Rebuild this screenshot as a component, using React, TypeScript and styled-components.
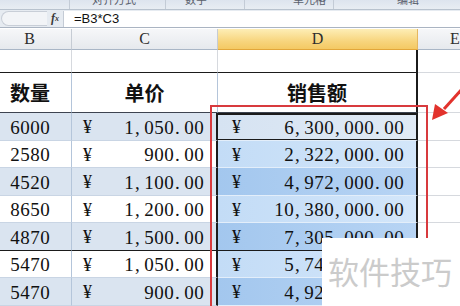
import React from "react";
import styled, { createGlobalStyle } from "styled-components";

const GlobalStyle = createGlobalStyle`
  html, body {
    margin: 0;
    padding: 0;
    background: #fff;
  }
  body {
    width: 460px;
    height: 306px;
    overflow: hidden;
    font-family: "Noto Sans CJK SC", sans-serif;
  }
`;

const Page = styled.div`
  position: relative;
  width: 460px;
  height: 306px;
  overflow: hidden;
  display: flex;
  flex-direction: column;
`;

/* ribbon strip, cut off at the top */
const Ribbon = styled.div`
  height: 10px;
  flex: none;
  display: flex;
  box-sizing: border-box;
  background: linear-gradient(#dde4ee, #e8edf3);
  border-bottom: 1px solid #b8c2ce;
  overflow: hidden;
`;

const Group = styled.div<{ $w: number; $pad: number }>`
  flex: none;
  width: ${(p) => p.$w}px;
  padding-left: ${(p) => p.$pad}px;
  box-sizing: border-box;
  border-right: 1px solid #c3cbd6;
  overflow: hidden;
`;

const GroupLabel = styled.span`
  display: block;
  margin-top: -6px;
  font-size: 11px;
  line-height: 11px;
  color: #59606c;
  white-space: nowrap;
`;

const FormulaBar = styled.div`
  height: 18px;
  flex: none;
  display: flex;
  align-items: stretch;
  box-sizing: border-box;
  background: #e6ebf1;
  border-bottom: 1px solid #aab4c2;
`;

const NameBox = styled.div`
  width: 46px;
  margin: 1px 0 1px 1px;
  box-sizing: border-box;
  border: 1px solid #c8ced7;
  border-right: none;
  border-radius: 8px 0 0 8px;
  background: #f2f4f7;
`;

const Fx = styled.div`
  width: 16px;
  display: flex;
  align-items: center;
  justify-content: center;
  font-family: "Liberation Serif", serif;
  font-style: italic;
  font-weight: 700;
  font-size: 12px;
  color: #3a3a3a;

  sub {
    font-size: 8px;
    vertical-align: -1px;
  }
`;

const FormulaInput = styled.div`
  flex: 1;
  margin: 1px 0 0;
  padding-left: 10px;
  background: #fff;
  border-left: 1px solid #c4cbd5;
  font-family: "Liberation Sans", sans-serif;
  font-size: 13px;
  line-height: 16px;
  color: #111;
`;

const Sheet = styled.div`
  margin-top: 1px;
  display: grid;
  grid-template-columns: 72px 146px 200px 1fr;
  grid-template-rows: 21px 23px 40px repeat(7, 27.5px);
`;

const ColHead = styled.div<{ $active?: boolean; $pl?: number; $pr?: number }>`
  display: flex;
  align-items: center;
  justify-content: ${(p) => (p.$pl ? "flex-start" : "center")};
  padding-left: ${(p) => p.$pl || 0}px;
  padding-right: ${(p) => p.$pr || 0}px;
  box-sizing: border-box;
  font-family: "Liberation Serif", serif;
  font-size: 16px;
  color: #2d2d2d;
  background: ${(p) =>
    p.$active
      ? "linear-gradient(#fdeeb6, #f7d57e 60%, #f4c963)"
      : "linear-gradient(#f6f7f9, #e6e9ed)"};
  border-right: 1px solid ${(p) => (p.$active ? "#e5b760" : "#c6ccd4")};
  border-bottom: 1px solid ${(p) => (p.$active ? "#e2a63a" : "#a9b6c6")};
`;

const GridCell = styled.div<{ $edge?: boolean; $dark?: boolean }>`
  box-sizing: border-box;
  background: #fff;
  border-right: ${(p) => (p.$edge ? "2px solid #1b1b1b" : "1px solid #d6d9de")};
  border-bottom: 1px solid ${(p) => (p.$dark ? "#1b1b1b" : "#d6d9de")};
`;

const HeadCell = styled.div<{ $left?: boolean; $edge?: boolean; $plain?: boolean }>`
  display: flex;
  align-items: center;
  justify-content: ${(p) => (p.$left ? "flex-start" : "center")};
  padding-left: ${(p) => (p.$left ? 10 : 0)}px;
  box-sizing: border-box;
  background: #fff;
  font-family: "Noto Sans CJK SC", sans-serif;
  font-weight: 700;
  font-size: 20px;
  color: #111;
  border-right: ${(p) =>
    p.$edge ? "2px solid #1b1b1b" : p.$plain ? "1px solid #d6d9de" : "1px solid #b4c5da"};
  border-bottom: 1px solid ${(p) => (p.$plain ? "#d6d9de" : "#3d4450")};
`;

const DataCell = styled.div<{
  $band: boolean;
  $split?: boolean;
  $edge?: boolean;
  $pl: number;
  $pr: number;
  $dark?: boolean;
}>`
  display: flex;
  align-items: center;
  justify-content: space-between;
  padding: 3px ${(p) => p.$pr}px 0 ${(p) => p.$pl}px;
  box-sizing: border-box;
  background: ${(p) => (p.$band ? "#dae4f0" : "#fff")};
  font-family: "Liberation Serif", serif;
  font-size: 19px;
  color: #111;
  border-right: ${(p) => (p.$edge ? "2px solid #1b1b1b" : "1px solid #b4c5da")};
  border-bottom: 1px solid ${(p) => (p.$dark ? "#1b1b1b" : "#c9d5e4")};
`;

const SalesCell = styled(DataCell)<{ $selected?: boolean }>`
  background: ${(p) =>
    p.$selected
      ? "linear-gradient(90deg, #d6e3f2, #e0eaf5)"
      : p.$band
      ? "linear-gradient(90deg, #c3dcf6, #d3e6fa)"
      : "linear-gradient(90deg, #a3c7ee, #b7d4f4)"};
  border-right: 2px solid #1b1b1b;
  border-bottom: 1px solid ${(p) => (p.$dark ? "#1b1b1b" : "#e3eefa")};
  box-shadow: ${(p) =>
    p.$selected ? "inset 0 2px 0 #1b1b1b, inset 0 -1px 0 #1b1b1b" : "none"};
`;

const EmptyCell = styled.div<{ $last?: boolean }>`
  box-sizing: border-box;
  background: #fff;
  border-bottom: 1px solid ${(p) => (p.$last ? "#fff" : "#d6d9de")};
`;

const Ch = styled.span<{ $punct: boolean }>`
  display: inline-block;
  width: 10px;
  text-align: ${(p) => (p.$punct ? "left" : "center")};
  padding-left: ${(p) => (p.$punct ? 1 : 0)}px;
  box-sizing: border-box;
`;

const Yen = styled.span`
  font-size: 18px;
`;

const Frame = styled.div`
  position: absolute;
  left: 210px;
  top: 105px;
  width: 218px;
  height: 220px;
  box-sizing: border-box;
  border: 2px solid #d83a3e;
  pointer-events: none;
`;

const Arrow = styled.svg`
  position: absolute;
  left: 426px;
  top: 84px;
`;

const Watermark = styled.div`
  position: absolute;
  left: 322px;
  top: 238px;
  width: 138px;
  height: 68px;
  box-sizing: border-box;
  padding: 16px 0 0 6px;
  background: #fff;
  font-family: "Noto Sans CJK SC", sans-serif;
  font-size: 31px;
  line-height: 34px;
  color: #cbcbcb;
  white-space: nowrap;
`;

const Mono = ({ text }: { text: string }) => (
  <span>
    {text.split("").map((c, i) => (
      <Ch key={i} $punct={c === "," || c === "."}>
        {c}
      </Ch>
    ))}
  </span>
);

const rows = [
  { qty: "6000", price: "1,050.00", total: "6,300,000.00" },
  { qty: "2580", price: "900.00", total: "2,322,000.00" },
  { qty: "4520", price: "1,100.00", total: "4,972,000.00" },
  { qty: "8650", price: "1,200.00", total: "10,380,000.00" },
  { qty: "4870", price: "1,500.00", total: "7,305,000.00" },
  { qty: "5470", price: "1,050.00", total: "5,743,500.00" },
  { qty: "5470", price: "900.00", total: "4,923,000.00" },
];

const groups = [
  { w: 70, pad: 0, label: "" },
  { w: 96, pad: 22, label: "对齐方式" },
  { w: 79, pad: 19, label: "数字" },
  { w: 89, pad: 48, label: "单元格" },
  { w: 140, pad: 63, label: "编辑" },
];

export default function App() {
  return (
    <Page>
      <GlobalStyle />
      <Ribbon>
        {groups.map((g, i) => (
          <Group key={i} $w={g.w} $pad={g.pad}>
            <GroupLabel>{g.label}</GroupLabel>
          </Group>
        ))}
      </Ribbon>

      <FormulaBar>
        <NameBox />
        <Fx>
          f<sub>x</sub>
        </Fx>
        <FormulaInput>=B3*C3</FormulaInput>
      </FormulaBar>

      <Sheet>
        <ColHead $pr={12}>B</ColHead>
        <ColHead>C</ColHead>
        <ColHead $active>D</ColHead>
        <ColHead $pl={32}>E</ColHead>

        <GridCell $dark />
        <GridCell $dark />
        <GridCell $dark $edge />
        <EmptyCell />

        <HeadCell $left>数量</HeadCell>
        <HeadCell>单价</HeadCell>
        <HeadCell $edge>销售额</HeadCell>
        <EmptyCell />

        {rows.map((r, i) => {
          const band = i % 2 === 0;
          const dark = i === 4;
          const last = i === rows.length - 1;
          return (
            <React.Fragment key={i}>
              <DataCell $band={band} $dark={dark} $pl={10} $pr={0}>
                <Mono text={r.qty} />
              </DataCell>
              <DataCell $band={band} $dark={dark} $edge $pl={11} $pr={12}>
                <Yen>¥</Yen>
                <Mono text={r.price} />
              </DataCell>
              <SalesCell $band={!band} $dark={dark} $selected={i === 0} $pl={14} $pr={12}>
                <Yen>¥</Yen>
                <Mono text={r.total} />
              </SalesCell>
              <EmptyCell $last={last} />
            </React.Fragment>
          );
        })}
      </Sheet>

      <Frame />
      <Arrow width="36" height="40" viewBox="0 0 36 40">
        <line x1="36" y1="5" x2="18" y2="25" stroke="#e2322c" strokeWidth="3" />
        <polygon points="6,36 9,20 22,29" fill="#e2322c" />
      </Arrow>
      <Watermark>软件技巧</Watermark>
    </Page>
  );
}
